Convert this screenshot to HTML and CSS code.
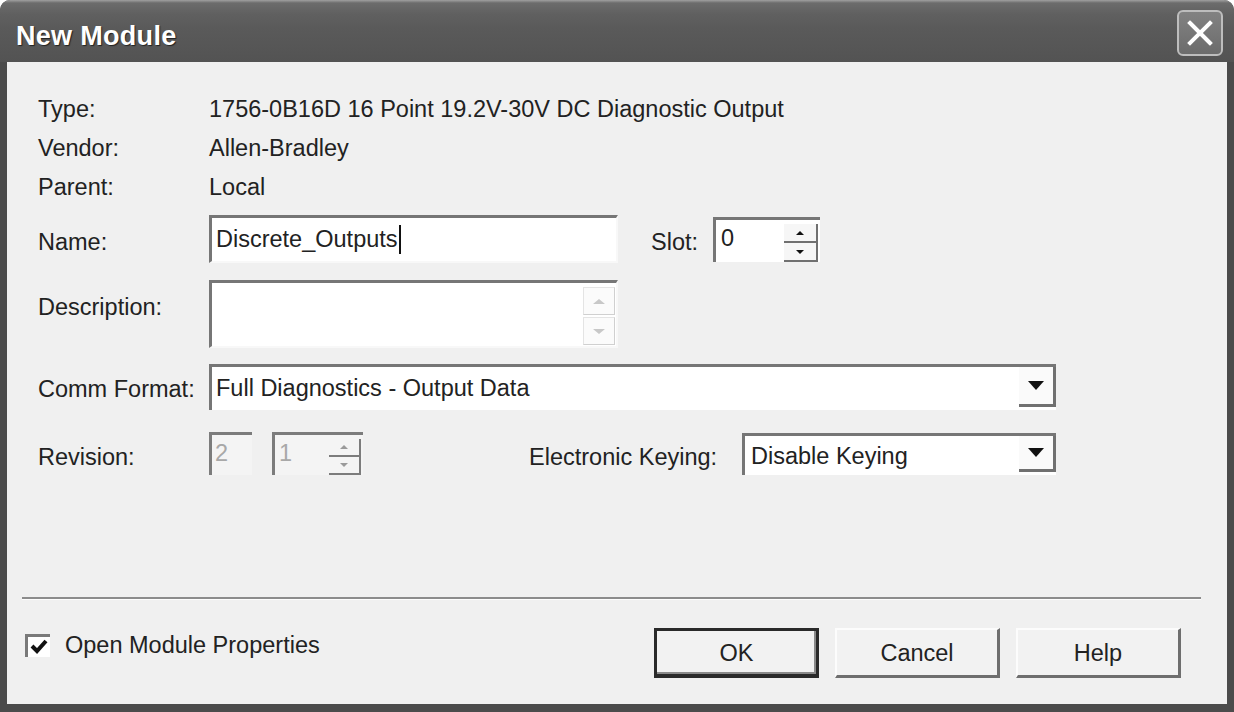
FILE: index.html
```html
<!DOCTYPE html>
<html>
<head>
<meta charset="utf-8">
<title>New Module</title>
<link rel="stylesheet" href="styles.css">
</head>
<body>
<div class="window">
  <div class="titlebar">
    <span class="title">New Module</span>
    <div class="close">
      <svg width="42" height="42" viewBox="0 0 42 42"><path d="M11 11 L31 31 M31 11 L11 31" stroke="#fff" stroke-width="4" stroke-linecap="square"/></svg>
    </div>
  </div>
  <div class="client">
    <div class="form">
      <div class="info-row"><span class="label">Type:</span><span>1756-0B16D 16 Point 19.2V-30V DC Diagnostic Output</span></div>
      <div class="info-row"><span class="label">Vendor:</span><span>Allen-Bradley</span></div>
      <div class="info-row"><span class="label">Parent:</span><span>Local</span></div>

      <div class="row name-row">
        <span class="label lbl-a">Name:</span>
        <div class="textbox name-box"><span class="val">Discrete_Outputs</span><span class="caret"></span></div>
        <span class="label-slot lbl-a">Slot:</span>
        <div class="spinbox slot-spin">
          <span class="spin-val">0</span>
          <div class="spin-btns">
            <div class="spin-btn"><span class="tri-up"></span></div>
            <div class="spin-btn"><span class="tri-down"></span></div>
          </div>
        </div>
      </div>

      <div class="row desc-row">
        <span class="label lbl-a">Description:</span>
        <div class="textbox desc-box">
          <div class="scroll-col">
            <div class="scroll-btn"><span class="chev-up"></span></div>
            <div class="scroll-btn"><span class="chev-down"></span></div>
          </div>
        </div>
      </div>

      <div class="row comm-row">
        <span class="label lbl-b">Comm Format:</span>
        <div class="combo comm-combo">
          <span class="combo-val">Full Diagnostics - Output Data</span>
          <div class="drop-btn"><span class="drop-tri"></span></div>
        </div>
      </div>

      <div class="row rev-row">
        <span class="label lbl-c">Revision:</span>
        <div class="dis-box major">2</div>
        <div class="spinbox dis-spin">
          <span class="spin-val">1</span>
          <div class="spin-btns">
            <div class="spin-btn"><span class="tri-up dis"></span></div>
            <div class="spin-btn"><span class="tri-down dis"></span></div>
          </div>
        </div>
        <span class="label-ek lbl-c">Electronic Keying:</span>
        <div class="combo ek-combo">
          <span class="combo-val">Disable Keying</span>
          <div class="drop-btn"><span class="drop-tri"></span></div>
        </div>
      </div>
    </div>

    <div class="separator"></div>

    <div class="footer">
      <div class="check-group">
        <div class="checkbox">
          <svg width="22" height="20" viewBox="0 0 22 20"><path d="M4 9 L9 14 L18 4" fill="none" stroke="#111" stroke-width="4"/></svg>
        </div>
        <span class="check-label">Open Module Properties</span>
      </div>
      <div class="buttons">
        <div class="btn btn-default">OK</div>
        <div class="btn">Cancel</div>
        <div class="btn">Help</div>
      </div>
    </div>
  </div>
</div>
</body>
</html>
```

FILE: styles.css
```css
html, body {
  margin: 0;
  padding: 0;
  background: #ffffff;
}
body {
  width: 1234px;
  height: 712px;
  overflow: hidden;
  font-family: "Liberation Sans", Arial, sans-serif;
  font-size: 23.5px;
  color: #222222;
}
.window {
  width: 1234px;
  height: 712px;
  box-sizing: border-box;
  background: #4b4b4b;
  border-radius: 10px 10px 0 0;
  display: flex;
  flex-direction: column;
}
.titlebar {
  height: 62px;
  flex: none;
  display: flex;
  align-items: flex-start;
  padding: 0 11px 0 16px;
  box-sizing: border-box;
  border-radius: 10px 10px 0 0;
  background: linear-gradient(#a0a0a0 0, #6c6c6c 3px, #606060 14px, #5a5a5a 45%, #535353 100%);
}
.title {
  flex: 1;
  color: #ffffff;
  font-weight: bold;
  font-size: 27px;
  line-height: 30px;
  margin-top: 21px;
  text-shadow: 1px 1px 1px #222;
  letter-spacing: 0.3px;
}
.close {
  margin-top: 10px;
  width: 46px;
  height: 46px;
  box-sizing: border-box;
  border: 2px solid #bdbdbd;
  border-radius: 6px;
  background: linear-gradient(#828282, #6c6c6c);
  display: flex;
  align-items: center;
  justify-content: center;
}
.client {
  flex: 1;
  margin: 0 7px 8px 7px;
  background: #f0f0f0;
  display: flex;
  flex-direction: column;
}
.form {
  padding: 28px 0 0 31px;
}
.info-row {
  display: flex;
  height: 39px;
  line-height: 39px;
}
.label {
  width: 171px;
  flex: none;
  line-height: 39px;
}
.row {
  display: flex;
  align-items: flex-start;
}
.lbl-a { margin-top: 8px; }
.lbl-b { margin-top: 6px; }
.lbl-c { margin-top: 6px; }

/* Name row */
.name-row { margin-top: 8px; }
.textbox {
  box-sizing: border-box;
  background: #ffffff;
  border-top: 3px solid #767676;
  border-left: 3px solid #767676;
  border-right: 2px solid #f8f8f8;
  border-bottom: 2px solid #f8f8f8;
}
.name-box {
  width: 409px;
  height: 48px;
  padding-left: 4px;
  display: flex;
  align-items: center;
}
.caret {
  display: inline-block;
  width: 2px;
  height: 29px;
  background: #111;
  margin-left: 1px;
}
.label-slot {
  width: 62px;
  margin-left: 33px;
  line-height: 39px;
  flex: none;
}
.spinbox {
  box-sizing: border-box;
  display: flex;
  border-top: 3px solid #767676;
  border-left: 3px solid #767676;
  background: #ffffff;
}
.slot-spin {
  width: 107px;
  height: 45px;
  margin-top: 2px;
}
.spin-val {
  flex: 1;
  padding-left: 5px;
  line-height: 36px;
}
.spin-btns {
  width: 34px;
  display: flex;
  flex-direction: column;
  margin-right: 2px;
  padding-top: 4px;
}
.spin-btn {
  flex: 1;
  box-sizing: border-box;
  border-right: 2px solid #707070;
  border-bottom: 2px solid #707070;
  background: #f6f6f6;
  display: flex;
  align-items: center;
  justify-content: center;
}
.tri-up {
  width: 0; height: 0;
  border-left: 4px solid transparent;
  border-right: 4px solid transparent;
  border-bottom: 4px solid #111;
}
.tri-down {
  width: 0; height: 0;
  border-left: 4px solid transparent;
  border-right: 4px solid transparent;
  border-top: 4px solid #111;
}
.tri-up.dis { border-bottom-color: #9a9a9a; }
.tri-down.dis { border-top-color: #9a9a9a; }

/* Description */
.desc-row { margin-top: 17px; }
.desc-box {
  width: 409px;
  height: 68px;
  display: flex;
  justify-content: flex-end;
}
.scroll-col {
  width: 32px;
  display: flex;
  flex-direction: column;
  padding: 4px 1px 1px 0;
  gap: 2px;
}
.scroll-btn {
  flex: 1;
  box-sizing: border-box;
  border: 1px solid #e4e4e4;
  border-right-color: #d0d0d0;
  border-bottom-color: #d0d0d0;
  background: #fbfbfb;
  display: flex;
  align-items: center;
  justify-content: center;
}
.chev-up {
  width: 0; height: 0;
  border-left: 6px solid transparent;
  border-right: 6px solid transparent;
  border-bottom: 5px solid #c8c8c8;
}
.chev-down {
  width: 0; height: 0;
  border-left: 6px solid transparent;
  border-right: 6px solid transparent;
  border-top: 5px solid #c8c8c8;
}

/* Combo */
.comm-row { margin-top: 16px; }
.combo {
  box-sizing: border-box;
  display: flex;
  background: #ffffff;
  border-top: 3px solid #767676;
  border-left: 3px solid #767676;
  padding-bottom: 3px;
}
.comm-combo {
  width: 847px;
  height: 46px;
}
.combo-val {
  flex: 1;
  padding-left: 4px;
  line-height: 42px;
}
.drop-btn {
  width: 37px;
  box-sizing: border-box;
  border-right: 3px solid #707070;
  border-bottom: 3px solid #707070;
  background: #fafafa;
  display: flex;
  align-items: center;
  justify-content: center;
}
.drop-tri {
  width: 0; height: 0;
  border-left: 8px solid transparent;
  border-right: 8px solid transparent;
  border-top: 9px solid #111;
}

/* Revision row */
.rev-row { margin-top: 22px; }
.dis-box {
  width: 43px;
  height: 43px;
  box-sizing: border-box;
  border-top: 3px solid #7c7c7c;
  border-left: 3px solid #7c7c7c;
  background: #f4f4f4;
  color: #a8a8a8;
  padding-left: 3px;
  line-height: 36px;
}
.dis-spin {
  width: 91px;
  height: 43px;
  margin-left: 20px;
  background: #f4f4f4;
  color: #a8a8a8;
  border-top-color: #7c7c7c;
  border-left-color: #7c7c7c;
}
.dis-spin .spin-val { padding-left: 4px; }
.dis-spin .spin-btns { width: 32px; }
.dis-spin .spin-btn { background: #f4f4f4; border-color: #7c7c7c; }
.label-ek {
  margin-left: 166px;
  width: 213px;
  flex: none;
  line-height: 39px;
}
.ek-combo {
  width: 314px;
  height: 42px;
  margin-top: 1px;
}
.ek-combo .combo-val { line-height: 40px; padding-left: 6px; }

/* Separator and footer */
.separator {
  margin: 120px 26px 0 15px;
  height: 2px;
  background: #8c8c8c;
  border-bottom: 1px solid #fdfdfd;
}
.footer {
  display: flex;
  align-items: flex-start;
  margin-top: 28px;
  padding-left: 18px;
}
.check-group {
  display: flex;
  align-items: center;
  margin-top: 4px;
}
.checkbox {
  width: 25px;
  height: 23px;
  box-sizing: border-box;
  border-top: 3px solid #7a7a7a;
  border-left: 3px solid #7a7a7a;
  background: #ffffff;
  display: flex;
  align-items: center;
  justify-content: center;
}
.check-label {
  margin-left: 15px;
  line-height: 26px;
}
.buttons {
  margin-left: auto;
  margin-right: 46px;
  display: flex;
  gap: 16px;
}
.btn {
  width: 165px;
  height: 50px;
  box-sizing: border-box;
  background: #f2f2f2;
  border-top: 2px solid #fcfcfc;
  border-left: 2px solid #fcfcfc;
  border-right: 3px solid #6e6e6e;
  border-bottom: 3px solid #6e6e6e;
  display: flex;
  align-items: center;
  justify-content: center;
  padding-top: 2px;
}
.btn-default {
  border: 3px solid #2a2a2a;
  border-right-width: 3px;
  border-bottom-width: 4px;
  box-shadow: inset -2px -2px 0 #8a8a8a;
}
```
